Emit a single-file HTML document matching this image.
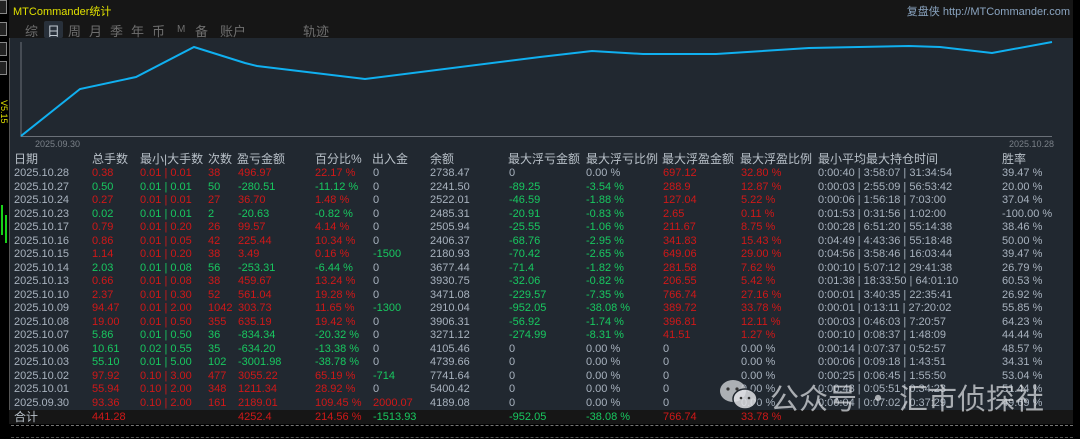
<!DOCTYPE html>
<html><head><meta charset="utf-8">
<style>
*{margin:0;padding:0;box-sizing:border-box}
body{width:1080px;height:439px;background:#000;overflow:hidden;position:relative;font-family:"Liberation Sans","Noto Sans CJK SC",sans-serif}
.a{position:absolute;white-space:nowrap}
#panel{position:absolute;left:9px;top:0;width:1064px;height:424px;background:#212830;border-left:1px solid #555;border-bottom:1px solid #555}
#top{position:absolute;left:9px;top:0;width:1064px;height:38px;background:#161616}
.tab{position:absolute;top:21px;font-size:13px;color:#6e6e6e}
.r{position:absolute;left:9px;width:1064px;height:14px;font-size:11px;line-height:14px}
.r span{position:absolute;top:0}
.g{color:#a8b2be}.R{color:#d01818}.G{color:#18c860}
.h{color:#b8c0c8;font-size:12px}
</style></head><body>
<div id="panel"></div>
<div id="top"></div>
<!-- left strip -->
<div class="a" style="left:0;top:0;width:7px;height:14px;border:1px solid #888;border-left:none;background:#222"></div>
<div class="a" style="left:0;top:22px;width:7px;height:14px;border:1px solid #888;border-left:none;background:#222"></div>
<div class="a" style="left:0;top:42px;width:7px;height:14px;border:1px solid #888;border-left:none;background:#222"></div>
<div class="a" style="left:0;top:61px;width:7px;height:14px;border:1px solid #888;border-left:none;background:#222"></div>
<div class="a" style="left:-4px;top:100px;font-size:9px;color:#e0e000;transform:rotate(90deg);transform-origin:left top;left:9px">V5.15</div>
<div class="a" style="left:1px;top:205px;width:2px;height:30px;background:#19d019"></div>
<div class="a" style="left:5px;top:215px;width:2px;height:28px;background:#19d019"></div>
<div class="a" style="left:11px;top:425px;width:1062px;height:0;border-top:1px dashed #777"></div>
<div class="a" style="left:11px;top:437px;width:1062px;height:0;border-top:1px dashed #555"></div>

<div class="a" style="left:13px;top:3px;font-size:11px;color:#e0e000">MTCommander统计</div>
<div class="a" style="right:10px;top:3px;font-size:11px;color:#8aa4c0">复盘侠 http://MTCommander.com</div>
<div class="a" style="left:44px;top:21px;width:19px;height:17px;background:#28303a;border-radius:2px"></div>
<div class="tab" style="left:25px">综</div>
<div class="tab" style="left:47px;color:#c0c8d0">日</div>
<div class="tab" style="left:68px">周</div>
<div class="tab" style="left:89px">月</div>
<div class="tab" style="left:110px">季</div>
<div class="tab" style="left:131px">年</div>
<div class="tab" style="left:152px">币</div>
<div class="tab" style="left:177px;font-size:10px;top:24px">M</div>
<div class="tab" style="left:195px">备</div>
<div class="tab" style="left:220px">账户</div>
<div class="tab" style="left:303px">轨迹</div>

<svg class="a" style="left:0;top:0" width="1080" height="150">
<line x1="21" y1="42" x2="21" y2="137" stroke="#6a7078" stroke-width="1"/>
<line x1="21" y1="136.5" x2="1052" y2="136.5" stroke="#6a7078" stroke-width="1"/>
<polyline fill="none" stroke="#10b0f0" stroke-width="2" points="21,136 80,89 136,77 194,47 245,63 257,66 365,79 540,57 592,51 643,54 716,54 809,48 909,46 940,47 992,53 1052,42"/>
</svg>
<div class="a" style="left:35px;top:139px;font-size:9px;color:#7a8088">2025.09.30</div>
<div class="a" style="left:1009px;top:139px;font-size:9px;color:#7a8088">2025.10.28</div>

<div class="r h" style="top:151px;height:16px;line-height:16px">
<span style="left:5px">日期</span><span style="left:83px">总手数</span><span style="left:131px">最小|大手数</span><span style="left:199px">次数</span><span style="left:228px">盈亏金额</span><span style="left:306px">百分比%</span><span style="left:363px">出入金</span><span style="left:421px">余额</span><span style="left:499px">最大浮亏金额</span><span style="left:577px">最大浮亏比例</span><span style="left:653px">最大浮盈金额</span><span style="left:731px">最大浮盈比例</span><span style="left:809px">最小平均最大持仓时间</span><span style="left:993px">胜率</span>
</div>

<div id="rows"></div>
<div class="a" style="left:9px;top:410px;width:1064px;height:14px;background:#161616"></div>
<div class="r" style="top:410px">
<span class="h g" style="left:5px;font-size:12px">合计</span><span class="R" style="left:83px">441.28</span><span class="R" style="left:229px">4252.4</span><span class="R" style="left:306px">214.56 %</span><span class="G" style="left:364px">-1513.93</span><span class="G" style="left:500px">-952.05</span><span class="G" style="left:577px">-38.08 %</span><span class="R" style="left:654px">766.74</span><span class="R" style="left:732px">33.78 %</span>
</div>

<script>
var d=[
["2025.10.28","R","0.38","0.01 | 0.01","38","496.97","22.17 %","0","2738.47","0","0.00 %","697.12","32.80 %","0:00:40 | 3:58:07 | 31:34:54","39.47 %"],
["2025.10.27","G","0.50","0.01 | 0.01","50","-280.51","-11.12 %","0","2241.50","-89.25","-3.54 %","288.9","12.87 %","0:00:03 | 2:55:09 | 56:53:42","20.00 %"],
["2025.10.24","R","0.27","0.01 | 0.01","27","36.70","1.48 %","0","2522.01","-46.59","-1.88 %","127.04","5.22 %","0:00:06 | 1:56:18 | 7:03:00","37.04 %"],
["2025.10.23","G","0.02","0.01 | 0.01","2","-20.63","-0.82 %","0","2485.31","-20.91","-0.83 %","2.65","0.11 %","0:01:53 | 0:31:56 | 1:02:00","-100.00 %"],
["2025.10.17","R","0.79","0.01 | 0.20","26","99.57","4.14 %","0","2505.94","-25.55","-1.06 %","211.67","8.75 %","0:00:28 | 6:51:20 | 55:14:38","38.46 %"],
["2025.10.16","R","0.86","0.01 | 0.05","42","225.44","10.34 %","0","2406.37","-68.76","-2.95 %","341.83","15.43 %","0:04:49 | 4:43:36 | 55:18:48","50.00 %"],
["2025.10.15","R","1.14","0.01 | 0.20","38","3.49","0.16 %","-1500","2180.93","-70.42","-2.65 %","649.06","29.00 %","0:04:56 | 3:58:46 | 16:03:44","39.47 %"],
["2025.10.14","G","2.03","0.01 | 0.08","56","-253.31","-6.44 %","0","3677.44","-71.4","-1.82 %","281.58","7.62 %","0:00:10 | 5:07:12 | 29:41:38","26.79 %"],
["2025.10.13","R","0.66","0.01 | 0.08","38","459.67","13.24 %","0","3930.75","-32.06","-0.82 %","206.55","5.42 %","0:01:38 | 18:33:50 | 64:01:10","60.53 %"],
["2025.10.10","R","2.37","0.01 | 0.30","52","561.04","19.28 %","0","3471.08","-229.57","-7.35 %","766.74","27.16 %","0:00:01 | 3:40:35 | 22:35:41","26.92 %"],
["2025.10.09","R","94.47","0.01 | 2.00","1042","303.73","11.65 %","-1300","2910.04","-952.05","-38.08 %","389.72","33.78 %","0:00:01 | 0:13:11 | 27:20:02","55.85 %"],
["2025.10.08","R","19.00","0.01 | 0.50","355","635.19","19.42 %","0","3906.31","-56.92","-1.74 %","396.81","12.11 %","0:00:03 | 0:46:03 | 7:20:57","64.23 %"],
["2025.10.07","G","5.86","0.01 | 0.50","36","-834.34","-20.32 %","0","3271.12","-274.99","-8.31 %","41.51","1.27 %","0:00:10 | 0:08:37 | 1:48:09","44.44 %"],
["2025.10.06","G","10.61","0.02 | 0.55","35","-634.20","-13.38 %","0","4105.46","0","0.00 %","0","0.00 %","0:00:14 | 0:07:37 | 0:52:57","48.57 %"],
["2025.10.03","G","55.10","0.01 | 5.00","102","-3001.98","-38.78 %","0","4739.66","0","0.00 %","0","0.00 %","0:00:06 | 0:09:18 | 1:43:51","34.31 %"],
["2025.10.02","R","97.92","0.10 | 3.00","477","3055.22","65.19 %","-714","7741.64","0","0.00 %","0","0.00 %","0:00:25 | 0:06:45 | 1:55:50","53.04 %"],
["2025.10.01","R","55.94","0.10 | 2.00","348","1211.34","28.92 %","0","5400.42","0","0.00 %","0","0.00 %","0:00:43 | 0:05:51 | 0:34:23","51.44 %"],
["2025.09.30","R","93.36","0.10 | 2.00","161","2189.01","109.45 %","2000.07","4189.08","0","0.00 %","0","0.00 %","0:00:04 | 0:07:02 | 0:37:29","49.69 %"]];
var L=[5,83,131,199,229,306,364,421,500,577,654,732,809,993],h="";
d.forEach(function(r,i){
 var c=r[1],top=166+i*13.5;
 function cl(v){return v==="0"?"g":(v.charAt(0)=="-"?"G":"R")}
 var cols=[["g",r[0]],[c,r[2]],[c,r[3]],[c,r[4]],[c,r[5]],[c,r[6]],[r[7]=="0"?"g":cl(r[7]),r[7]],["g",r[8]],[r[9]=="0"?"g":"G",r[9]],[r[10]=="0.00 %"?"g":"G",r[10]],[r[11]=="0"?"g":"R",r[11]],[r[12]=="0.00 %"?"g":"R",r[12]],["g",r[13]],["g",r[14]]];
 h+='<div class="r" style="top:'+top+'px">';
 cols.forEach(function(x,j){h+='<span class="'+x[0]+'" style="left:'+L[j]+'px">'+x[1]+'</span>'});
 h+='</div>';
});
document.getElementById("rows").innerHTML=h;
</script>

<!-- watermark -->
<svg class="a" style="left:718px;top:378px" width="42" height="34" viewBox="0 0 42 34">
<ellipse cx="15" cy="13" rx="13" ry="11" fill="#cfd2d6" fill-opacity="0.8"/>
<ellipse cx="27" cy="21" rx="12" ry="10" fill="#dfe1e4" fill-opacity="0.85" stroke="#212830" stroke-width="1.5"/>
<circle cx="10" cy="11" r="1.6" fill="#333"/><circle cx="19" cy="11" r="1.6" fill="#333"/>
<circle cx="23" cy="20" r="1.3" fill="#333"/><circle cx="31" cy="20" r="1.3" fill="#333"/>
</svg>
<div class="a" style="left:770px;top:376px;font-size:29px;color:rgba(215,218,222,0.75);font-family:'Noto Sans CJK SC',sans-serif">公众号 · 汇市侦探社</div>
</body></html>
